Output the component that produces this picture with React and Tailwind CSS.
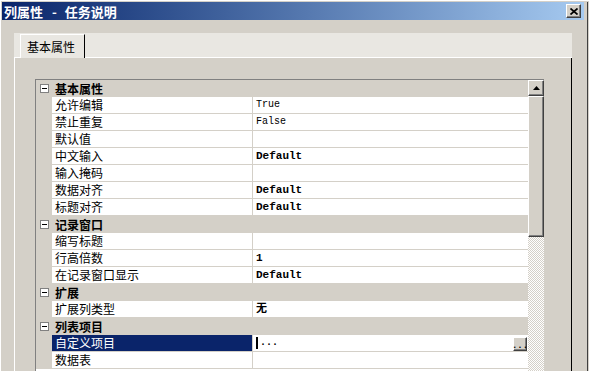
import React from "react";

const cjk = "font-['Noto_Sans_CJK_SC','Noto_Sans',sans-serif]";
const mono = "font-['Liberation_Mono','Noto_Sans_CJK_SC',monospace]";

const groups = [
  {
    title: "基本属性",
    rows: [
      { name: "允许编辑", value: "True" },
      { name: "禁止重复", value: "False" },
      { name: "默认值", value: "" },
      { name: "中文输入", value: "Default", bold: true },
      { name: "输入掩码", value: "" },
      { name: "数据对齐", value: "Default", bold: true },
      { name: "标题对齐", value: "Default", bold: true },
    ],
  },
  {
    title: "记录窗口",
    rows: [
      { name: "缩写标题", value: "" },
      { name: "行高倍数", value: "1", bold: true },
      { name: "在记录窗口显示", value: "Default", bold: true },
    ],
  },
  {
    title: "扩展",
    rows: [{ name: "扩展列类型", value: "无", bold: true }],
  },
  {
    title: "列表项目",
    rows: [
      { name: "自定义项目", value: "...", selected: true },
      { name: "数据表", value: "" },
    ],
  },
];

function Raised({ className = "", children }) {
  return (
    <div
      className={`border border-t-white border-l-white border-b-[#404040] border-r-[#404040] bg-[#d4d0c8] shadow-[inset_-1px_-1px_0_#808080] ${className}`}
    >
      {children}
    </div>
  );
}

function GroupRow({ title }) {
  return (
    <div className="flex h-[17px] items-center bg-[#d4d0c8] pl-[4px]">
      <div className="flex h-[9px] w-[9px] items-center justify-center border border-[#808080] bg-white">
        <div className="h-px w-[5px] bg-black" />
      </div>
      <span className={`ml-[6px] text-[12px] font-bold leading-none text-black ${cjk}`}>
        {title}
      </span>
    </div>
  );
}

function PropRow({ row }) {
  return (
    <div className="flex h-[17px] border-b border-[#d4d0c8]">
      <div className="w-[16px] bg-[#d4d0c8]" />
      <div
        className={`flex w-[201px] items-center border-r border-[#d4d0c8] pl-[3px] text-[12px] leading-none ${cjk} ${
          row.selected ? "bg-[#0a246a] text-white" : "bg-white text-black"
        }`}
      >
        {row.name}
      </div>
      <div className="flex flex-1 items-center bg-white pl-[3px]">
        {row.selected ? (
          <>
            <div className="h-[12px] w-[2px] bg-black" />
            <span className={`ml-[2px] text-[10px] font-bold leading-none text-black ${mono}`}>...</span>
            <Raised className="mr-[1px] mt-auto ml-auto flex h-[14px] w-[14px] items-end justify-center pb-[1px]">
              <span className={`text-[9px] font-bold leading-[6px] text-black ${mono}`}>...</span>
            </Raised>
          </>
        ) : (
          <span
            className={`leading-none text-black ${mono} ${
              row.bold ? "text-[11px] font-bold" : "text-[10px]"
            }`}
          >
            {row.value}
          </span>
        )}
      </div>
    </div>
  );
}

export default function App() {
  return (
    <div className="h-[371px] w-[589px] overflow-hidden bg-[#d4d0c8] pr-[1px] pt-[2px] pl-[2px] shadow-[inset_1px_1px_0_#ffffff]">
      <div className="flex h-full flex-col border-r border-[#404040] pr-[3px]">
        {/* title bar */}
        <div className="flex h-[18px] items-center bg-linear-to-r from-[#0a246a] to-[#a6caf0] pl-[2px]">
          <div className={`flex items-center text-[13px] font-bold leading-none text-white ${cjk}`}>
            <span>列属性</span>
            <span className="ml-[9px]">-</span>
            <span className="ml-[8px]">任务说明</span>
          </div>
          <Raised className="ml-auto mr-[3px] flex h-[14px] w-[15px] items-center justify-center">
            <svg width="8" height="7" viewBox="0 0 8 7">
              <path d="M0.5 0.5 L7.5 6.5 M7.5 0.5 L0.5 6.5" stroke="black" strokeWidth="1.7" />
            </svg>
          </Raised>
        </div>

        {/* tab strip + panel */}
        <div className="ml-[12px] mt-[13px] flex w-[558px] flex-1 flex-col">
          <div className="flex h-[25px] items-end bg-[#e9e7e2]">
            <div className="h-full w-[6px] border-b border-white" />
            <div
              className={`flex h-[24px] w-[65px] items-center border-l border-t border-r border-l-white border-t-white border-r-black pl-[6px] text-[12px] leading-none text-black ${cjk}`}
            >
              基本属性
            </div>
            <div className="h-full flex-1 border-b border-white" />
          </div>

          <div className="flex flex-1 flex-col border-l border-r border-l-white border-r-black pl-[20px] pt-[21px]">
            <div className="flex w-[509px] flex-1 overflow-hidden border-l border-t border-[#808080]">
              <div className="flex w-[492px] flex-col bg-white">
                {groups.map((g) => (
                  <React.Fragment key={g.title}>
                    <GroupRow title={g.title} />
                    {g.rows.map((r) => (
                      <PropRow key={r.name} row={r} />
                    ))}
                  </React.Fragment>
                ))}
              </div>
              <div className="flex w-[16px] flex-col">
                <Raised className="flex h-[16px] items-center justify-center">
                  <svg width="7" height="4" viewBox="0 0 7 4">
                    <polygon points="3.5,0 7,4 0,4" fill="black" />
                  </svg>
                </Raised>
                <Raised className="h-[141px]" />
                <div className="flex-1 bg-[repeating-conic-gradient(#d4d0c8_0%_25%,#ffffff_0%_50%)] bg-[length:2px_2px]" />
              </div>
            </div>
          </div>
        </div>
      </div>
    </div>
  );
}
